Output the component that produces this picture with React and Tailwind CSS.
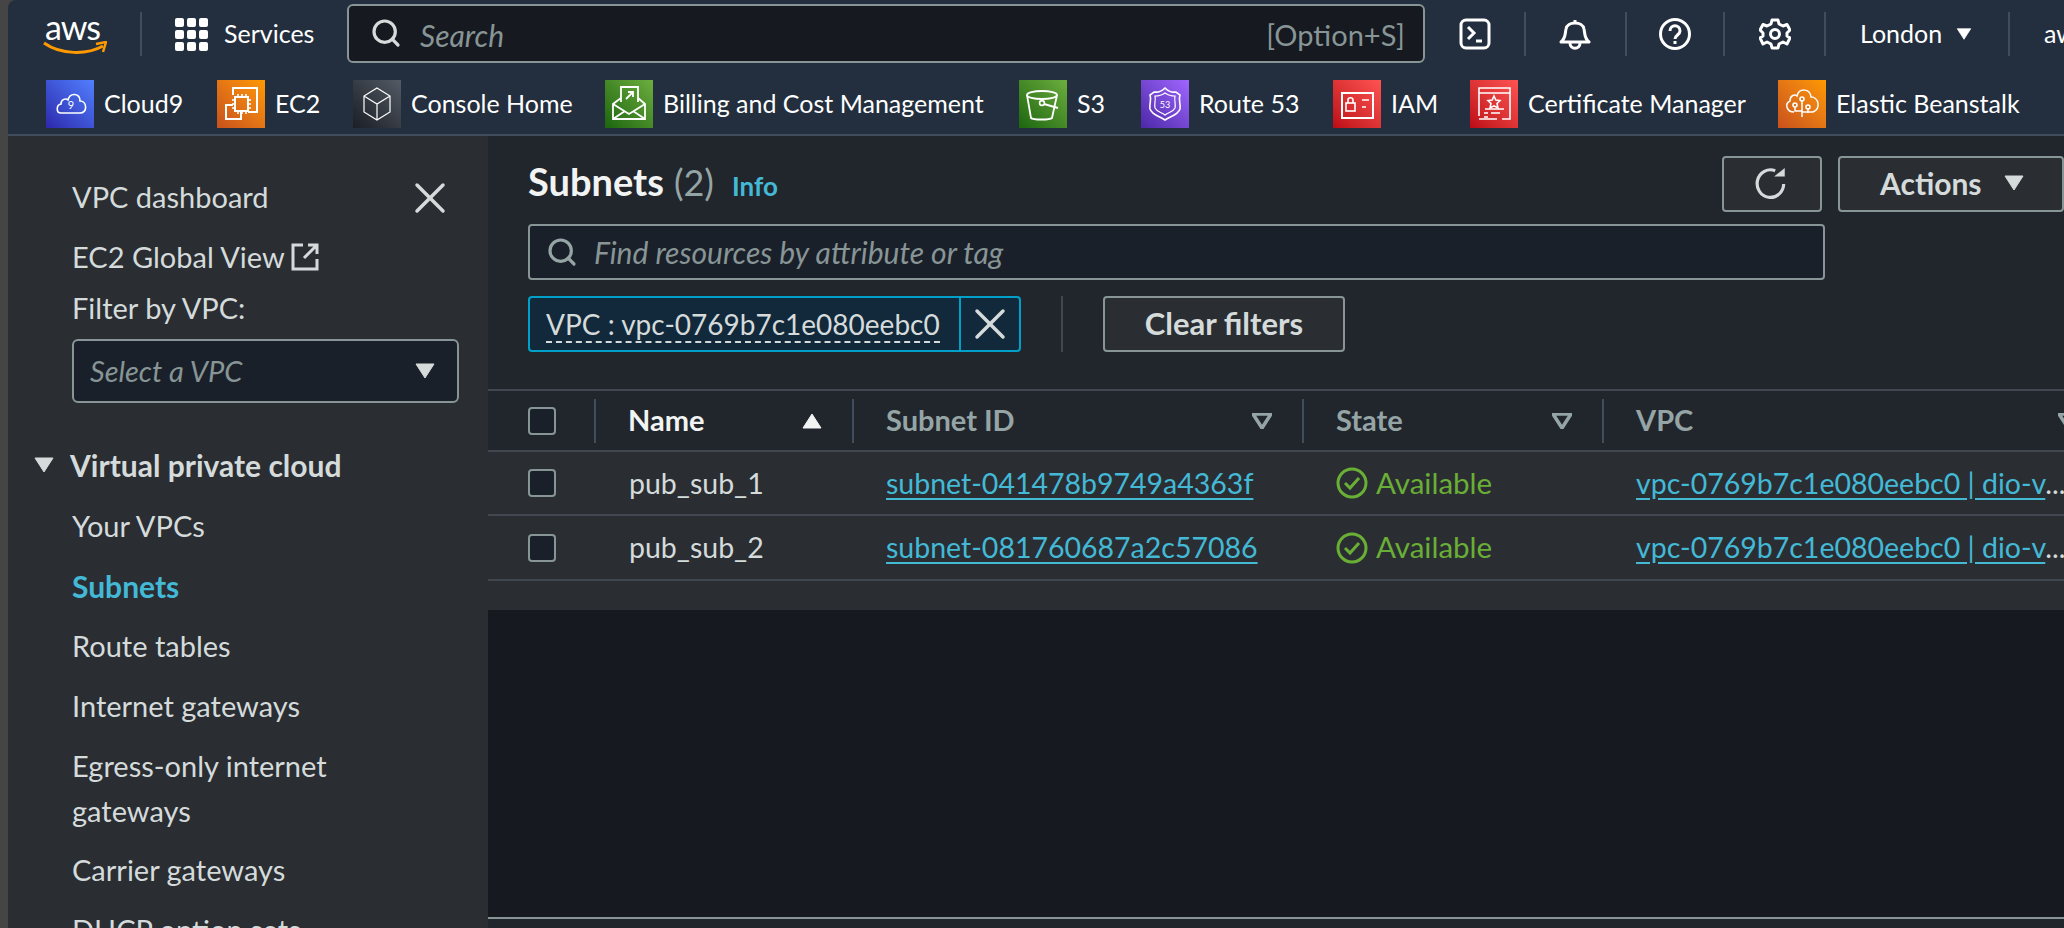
import { Search, X } from "lucide-react";

const font = { fontFamily: "Lato, 'Noto Sans', sans-serif" };

const Caret = ({ className, up, outline }) => (
  <svg viewBox="0 0 20 16" className={className}>
    <path
      d={up ? "M10 1 L19 15 H1 Z" : "M1 1 H19 L10 15 Z"}
      fill={outline ? "none" : "currentColor"}
      stroke="currentColor"
      strokeWidth={outline ? 3.5 : 1}
      strokeLinejoin="round"
    />
  </svg>
);

const Tile = ({ className, children }) => (
  <div className={`w-12 h-12 shrink-0 ${className}`}>
    <svg viewBox="0 0 48 48" className="w-12 h-12" fill="none" stroke="#fff" strokeWidth="1.6">
      {children}
    </svg>
  </div>
);

const orange = "bg-linear-to-tr from-[#c8511b] to-[#ff9900]";
const green = "bg-linear-to-tr from-[#1b660f] to-[#6cae3e]";
const red = "bg-linear-to-tr from-[#bd0816] to-[#ff5252]";

const favorites = [
  {
    name: "Cloud9",
    width: "w-[77px]",
    tile: "bg-linear-to-tr from-[#2e27ad] to-[#527fff]",
    icon: (
      <>
        <path d="M15 33 C10 33 10 25 15 24 C15 19 20 18 22 20 C24 12 34 13 34 21 C41 21 42 33 34 33 Z" />
        <text x="25" y="29" fontSize="11" fill="#fff" stroke="none" textAnchor="middle">9</text>
      </>
    ),
  },
  {
    name: "EC2",
    width: "w-[42px]",
    tile: orange,
    icon: (
      <>
        <path d="M16 15 V8 H40 V32 H31 M16 25 H9 V39 H24 V32" strokeWidth="2" />
        <rect x="18" y="17" width="13" height="14" strokeWidth="2" />
        <path d="M21 14 V17 M25 14 V17 M29 14 V17 M21 31 V34 M25 31 V34 M29 31 V34 M15 20 H18 M15 24 H18 M15 28 H18 M31 20 H34 M31 24 H34 M31 28 H34" />
      </>
    ),
  },
  {
    name: "Console Home",
    width: "w-[158px]",
    tile: "bg-linear-to-tr from-[#1b1f27] to-[#545b64]",
    icon: <path d="M24 8 L37 16 V32 L24 40 L11 32 V16 Z M11 16 L24 24 L37 16 M24 24 V40" strokeWidth="1.2" />,
  },
  {
    name: "Billing and Cost Management",
    width: "w-[320px]",
    tile: green,
    icon: (
      <path d="M16 22 V7 H33 V22 M16 18 L8 24 V39 H40 V24 L33 18 M8 24 L24 34 L40 24 M8 39 L20 31 M40 39 L28 31 M21 19 L28 12 M23 12 H28 V17" strokeWidth="1.8" />
    ),
  },
  {
    name: "S3",
    width: "w-[28px]",
    tile: green,
    icon: (
      <>
        <ellipse cx="23" cy="15" rx="15" ry="4" strokeWidth="1.8" />
        <path d="M8 15 L12 38 C14 40 31 40 33 38 L38 15" strokeWidth="1.8" />
        <circle cx="23" cy="23" r="2.4" strokeWidth="1.6" />
        <path d="M25 24 L39 28" strokeWidth="2" />
      </>
    ),
  },
  {
    name: "Route 53",
    width: "w-[98px]",
    tile: "bg-linear-to-tr from-[#4d27a8] to-[#a166ff]",
    icon: (
      <>
        <path d="M13 12 Q19 13 24 8 Q29 13 35 12 L39 15 C37 20 40 24 39 29 C37 35 30 36 24 40 C18 36 11 35 9 29 C8 24 11 20 9 15 Z" strokeWidth="1.6" />
        <path d="M14 16 Q20 16 24 13 Q28 16 34 16 C33 20 35 24 34 28 C32 32 28 32 24 35 C20 32 16 32 14 28 C13 24 15 20 14 16 Z" strokeWidth="1.2" />
        <text x="24" y="28" fontSize="9" fill="#fff" stroke="none" textAnchor="middle">53</text>
      </>
    ),
  },
  {
    name: "IAM",
    width: "w-[43px]",
    tile: red,
    icon: (
      <>
        <rect x="9" y="13" width="31" height="25" strokeWidth="2" />
        <rect x="13" y="23" width="9" height="8" strokeWidth="1.6" />
        <path d="M15 23 V20 C15 17 20 17 20 20 V23 M29 20 H36 M29 27 H33" strokeWidth="1.6" />
      </>
    ),
  },
  {
    name: "Certificate Manager",
    width: "w-[214px]",
    tile: red,
    icon: (
      <>
        <path d="M9 36 V8 H40 V39 H32 M9 13 H40 M9 39 H27" strokeWidth="1.6" />
        <path d="M24 16 L25.8 20 L30 20.5 L27 23.5 L28 28 L24 25.8 L20 28 L21 23.5 L18 20.5 L22.2 20 Z" strokeWidth="1.6" />
        <path d="M15 29 H34 M14 33 H18 M21 33 H30 M14 37 H18" strokeWidth="1.4" />
      </>
    ),
  },
  {
    name: "Elastic Beanstalk",
    width: "w-[181px]",
    tile: orange,
    icon: (
      <>
        <path d="M16 32 C9 32 6 24 12 21 C12 15 17 14 19 16 C21 8 32 8 33 17 C41 17 43 29 35 32 H29" strokeWidth="1.5" />
        <circle cx="24" cy="19" r="2" />
        <circle cx="17" cy="25" r="2" />
        <circle cx="30" cy="27" r="2" />
        <path d="M24 21 V37 M17 27 V31 H24 M30 29 V32 H24" strokeWidth="1.5" />
      </>
    ),
  },
];

const navLinks = [
  "Your VPCs",
  "Subnets",
  "Route tables",
  "Internet gateways",
];

const subnets = [
  { name: "pub_sub_1", id: "subnet-041478b9749a4363f", height: "h-[64px]" },
  { name: "pub_sub_2", id: "subnet-081760687a2c57086", height: "h-[65px]" },
];

const Divider = () => <div className="w-0.5 h-11 bg-[#414d5c] shrink-0" />;

const TopNav = () => (
  <header className="bg-[#232f3e] rounded-tl-lg border-b-2 border-[#414d5c] h-[136px] shrink-0">
    <div className="h-[68px] flex items-center relative">
      <div className="w-[132px] h-[44px] pl-[35px] relative shrink-0">
        <div className="text-[34px] leading-[30px] text-white tracking-[-1px] pl-0.5">aws</div>
        <svg viewBox="0 0 64 14" className="w-16 h-[14px] -mt-[1px]">
          <path d="M1 2 C18 14 44 14 60 5" fill="none" stroke="#ff9900" strokeWidth="3" />
          <path d="M53 3 L63 1 L60 11" fill="none" stroke="#ff9900" strokeWidth="2.5" />
        </svg>
      </div>
      <div className="w-0.5 h-11 bg-[#414d5c] shrink-0" />
      <div className="grid grid-cols-3 gap-[3px] w-[33px] h-[33px] ml-[33px] shrink-0">
        {Array.from({ length: 9 }).map((_, i) => (
          <div key={i} className="bg-white rounded-[2px]" />
        ))}
      </div>
      <span className="ml-4 w-[123px] text-[25px] text-white shrink-0">Services</span>
      <div className="w-[1078px] h-[59px] -mt-0.5 shrink-0 bg-[#16191f] border-2 border-[#879596] rounded-md flex items-center pl-[21px] pr-[18px]">
        <Search className="w-8 h-8 text-[#d5dbdb]" strokeWidth={2.4} />
        <span className="ml-[18px] pt-1 text-[30px] italic text-[#879596]">Search</span>
        <span className="ml-auto pt-1 text-[29px] text-[#879596]">[Option+S]</span>
      </div>
      <svg viewBox="0 0 32 32" className="w-8 h-8 ml-[34px] shrink-0" fill="none" stroke="#fff" strokeWidth="3">
        <rect x="2" y="2" width="28" height="28" rx="5" />
        <path d="M9 9 L15 15 L9 21 M17 23 H23" />
      </svg>
      <div className="ml-[33px]"><Divider /></div>
      <svg viewBox="0 0 32 32" className="w-8 h-8 ml-[33px] shrink-0" fill="none" stroke="#fff" strokeWidth="3" strokeLinejoin="round">
        <path d="M2 24 C7 20 6 15 7 11 C8 3 24 3 25 11 C26 15 25 20 30 24 Z M16 2 V5" />
        <path d="M11 25 C11 32 21 32 21 25" />
      </svg>
      <div className="ml-[34px]"><Divider /></div>
      <svg viewBox="0 0 32 32" className="w-8 h-8 ml-[32px] shrink-0" fill="none" stroke="#fff" strokeWidth="3">
        <circle cx="16" cy="16" r="14.5" />
        <path d="M11 13 C11 6 21 6 21 13 C21 17 16 17 16 21 M16 23 V26" />
      </svg>
      <div className="ml-[32px]"><Divider /></div>
      <svg viewBox="0 0 32 32" className="w-8 h-8 ml-[34px] shrink-0" fill="none" stroke="#fff" strokeWidth="3" strokeLinejoin="round">
        <path d="M13 2 H19 L20 6 L24 8 L28 6.5 L31 12 L28 15 V18 L31 20 L28 26 L24 24 L20 26 L19 30 H13 L12 26 L8 24 L4 26 L1 20 L4 18 V15 L1 12 L4 6.5 L8 8 L12 6 Z" />
        <circle cx="16" cy="16" r="4.5" />
      </svg>
      <div className="ml-[33px]"><Divider /></div>
      <span className="ml-[34px] w-[82px] text-[25px] text-white shrink-0">London</span>
      <Caret className="w-4 h-3 text-white ml-3.5 shrink-0" />
      <div className="ml-[36px]"><Divider /></div>
      <span className="ml-[34px] text-[25px] text-white">aws</span>
    </div>
    <div className="h-[66px] flex items-start pt-3 pl-[38px] gap-9 whitespace-nowrap">
      {favorites.map((item) => (
        <div key={item.name} className="flex items-center gap-2.5 shrink-0">
          <Tile className={item.tile}>{item.icon}</Tile>
          <span className={`${item.width} text-[25px] text-white`}>{item.name}</span>
        </div>
      ))}
    </div>
  </header>
);

const Sidebar = () => (
  <aside className="w-[480px] shrink-0 bg-[#2a2e33] text-[29px] text-[#d5dbdb] overflow-hidden pt-[31px] pl-16 relative">
    <div className="h-[60px] flex items-center">
      VPC dashboard
      <X className="absolute left-[396px] top-[36px] w-[52px] h-[52px] text-[#d5dbdb]" strokeWidth={1.6} />
    </div>
    <div className="h-[60px] flex items-center">
      EC2 Global View
      <svg viewBox="0 0 28 28" className="w-7 h-7 ml-1.5" fill="none" stroke="#d5dbdb" strokeWidth="3">
        <path d="M12 2 H2 V26 H26 V16 M13 15 L25 3 M17 2 H26 V11" />
      </svg>
    </div>
    <div className="h-[42px] flex items-center">Filter by VPC:</div>
    <div className="mt-2.5 w-[387px] h-16 bg-[#1a2029] border-2 border-[#879596] rounded-md flex items-center pl-4 pr-[22px]">
      <span className="italic text-[#879596]">Select a VPC</span>
      <Caret className="w-5 h-4 ml-auto text-[#d5dbdb]" />
    </div>
    <div className="mt-8 mb-px h-[60px] flex items-center font-bold text-[30px] -ml-[38px]">
      <Caret className="w-5 h-4 mr-4 text-[#d5dbdb]" />
      Virtual private cloud
    </div>
    {navLinks.map((link) => (
      <div key={link} className={`h-[60px] flex items-center ${link === "Subnets" ? "font-bold text-[30px] text-[#44b9d6]" : ""}`}>
        {link}
      </div>
    ))}
    <div className="py-[7px] leading-[45px]">
      Egress-only internet
      <br />
      gateways
    </div>
    <div className="h-[60px] flex items-center">Carrier gateways</div>
    <div className="h-[60px] flex items-center">DHCP option sets</div>
  </aside>
);

const HeaderCell = ({ width, active, label, up }) => (
  <div className={`${width} flex items-center shrink-0 pr-[30px]`}>
    <Divider />
    <span className={`ml-8 pb-0.5 font-bold text-[29px] ${active ? "text-[#f2f3f3]" : "text-[#95a5a6]"}`}>{label}</span>
    {up ? (
      <Caret up className="w-5 h-4 ml-auto text-[#f2f3f3]" />
    ) : (
      <Caret outline className="w-5 h-4 ml-auto text-[#95a5a6]" />
    )}
  </div>
);

const Checkbox = () => (
  <div className="w-7 h-7 shrink-0 bg-[#1a2029] border-2 border-[#879596] rounded" />
);

const SubnetRow = ({ row }) => (
  <div className={`${row.height} shrink-0 flex items-center bg-[#2a2e33] border-b-2 border-[#414750] text-[28.5px]`}>
    <div className="w-[106px] pl-10 shrink-0"><Checkbox /></div>
    <div className="w-[258px] pl-[35px] shrink-0 text-[#d5dbdb]">{row.name}</div>
    <div className="w-[450px] pl-[34px] shrink-0 text-[#44b9d6] underline underline-offset-4">{row.id}</div>
    <div className="w-[300px] pl-[34px] shrink-0 flex items-center text-[29.5px] text-[#6aaf35]">
      <svg viewBox="0 0 32 32" className="w-8 h-8 mr-2" fill="none" stroke="#6aaf35" strokeWidth="3">
        <circle cx="16" cy="16" r="14" />
        <path d="M9 16 L14 21 L23 11" />
      </svg>
      Available
    </div>
    <div className="pl-[34px] text-[#44b9d6] whitespace-nowrap">
      <span className="underline underline-offset-4">vpc-0769b7c1e080eebc0 | dio-v</span>
      <span className="text-[#d5dbdb]">...</span>
    </div>
  </div>
);

const Content = () => (
  <main className="flex-1 min-w-0 flex flex-col overflow-hidden bg-[#16191f]">
    <div className="bg-[#21252c] h-[253px] pt-5 pl-10 shrink-0">
      <div className="h-14 flex items-center">
        <h1 className="text-[38px] font-bold text-[#f2f3f3] -mt-[5px]">Subnets</h1>
        <span className="ml-2.5 text-[36px] text-[#95a5a6] -mt-[5px]">(2)</span>
        <span className="ml-[18px] mt-1 text-[26px] font-bold text-[#44b9d6]">Info</span>
        <button className="ml-auto w-[100px] h-14 bg-[#2a2e33] border-2 border-[#879596] rounded flex items-center justify-center">
          <svg viewBox="0 0 32 32" className="w-[34px] h-[34px]" fill="none" stroke="#d5dbdb" strokeWidth="3">
            <path d="M27 16 A12.5 13 0 1 1 19 3.5" />
            <path d="M18 9 H28 V1 Z" fill="#d5dbdb" stroke="none" />
          </svg>
        </button>
        <button className="ml-4 w-[226px] h-14 pb-0.5 bg-[#2a2e33] border-2 border-[#879596] rounded flex items-center pl-10 text-[30px] font-bold text-[#d5dbdb]">
          Actions
          <Caret className="w-5 h-4 ml-[22px] text-[#d5dbdb]" />
        </button>
      </div>
      <div className="mt-3 w-[1297px] h-14 bg-[#1a2029] border-2 border-[#879596] rounded flex items-center pl-4 text-[30px] italic text-[#879596]">
        <Search className="w-8 h-8 text-[#95a5a6]" strokeWidth={2.4} />
        <span className="ml-4">Find resources by attribute or tag</span>
      </div>
      <div className="mt-4 h-14 flex items-center">
        <div className="w-[493px] h-14 bg-[#12293b] border-2 border-[#00a1c9] rounded flex items-center text-[28px] text-[#d5dbdb]">
          <span className="w-[429px] pl-4 shrink-0 whitespace-nowrap">
            <span className="border-b-2 border-dashed border-[#d5dbdb]">VPC : vpc-0769b7c1e080eebc0</span>
          </span>
          <div className="border-l-2 border-[#00a1c9] h-full flex-1 flex items-center justify-center">
            <X className="w-[52px] h-[52px] shrink-0 text-[#d5dbdb]" strokeWidth={1.6} />
          </div>
        </div>
        <div className="ml-10 w-0.5 h-14 bg-[#414750]" />
        <button className="ml-10 w-[242px] h-14 pb-0.5 bg-[#2a2e33] border-2 border-[#879596] rounded flex items-center justify-center text-[31px] font-bold text-[#d5dbdb]">
          Clear filters
        </button>
      </div>
    </div>
    <div className="h-[63px] shrink-0 bg-[#21252c] border-y-2 border-[#414750] flex items-center whitespace-nowrap">
      <div className="w-[106px] pl-10 shrink-0"><Checkbox /></div>
      <HeaderCell width="w-[258px]" active up label="Name" />
      <HeaderCell width="w-[450px]" label="Subnet ID" />
      <HeaderCell width="w-[300px]" label="State" />
      <HeaderCell width="w-[506px]" label="VPC" />
    </div>
    {subnets.map((row) => (
      <SubnetRow key={row.name} row={row} />
    ))}
    <div className="h-[29px] shrink-0 bg-[#2a2e33]" />
    <div className="flex-1 bg-[#16191f]" />
    <div className="h-[11px] shrink-0 border-t-2 border-[#879596] bg-[#21252c]" />
  </main>
);

export default function App() {
  return (
    <div style={font} className="w-[2064px] h-[928px] overflow-hidden bg-[#454545] pl-2 flex flex-col">
      <TopNav />
      <div className="flex flex-1 min-h-0">
        <Sidebar />
        <Content />
      </div>
    </div>
  );
}
